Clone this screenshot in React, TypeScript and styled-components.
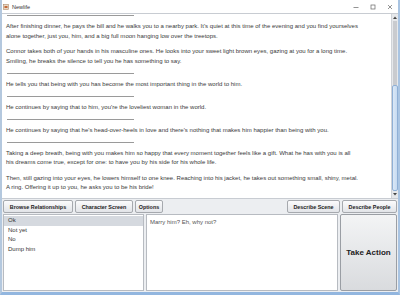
import styled, { createGlobalStyle } from "styled-components"

const GlobalStyle = createGlobalStyle`
  html, body {
    margin: 0;
    padding: 0;
    background: #ffffff;
  }
  * { box-sizing: border-box; }
`

const Window = styled.div`
  width: 400px;
  height: 295px;
  display: flex;
  flex-direction: column;
  background: #eceef1;
  border-left: 2px solid #b4c8de;
  border-right: 2px solid #a9c4e2;
  border-bottom: 3px solid #92b6df;
  font-family: "Liberation Sans", Arial, sans-serif;
  overflow: hidden;
`

const TitleBar = styled.div`
  height: 13px;
  flex: none;
  display: flex;
  align-items: center;
  background: #ffffff;
  padding-left: 1px;
`

const TitleText = styled.span`
  font-size: 5.5px;
  color: #333;
  margin-left: 3px;
`

const Controls = styled.div`
  margin-left: auto;
  display: flex;
  align-items: center;
  gap: 11px;
  padding-right: 5px;
  color: #555;
`

const StoryPanel = styled.div`
  flex: 1;
  display: flex;
  background: #ffffff;
  border-top: 1px solid #c8ccd2;
  border-bottom: 1px solid #c8ccd2;
  min-height: 0;
`

const Story = styled.div`
  flex: 1;
  display: flex;
  flex-direction: column;
  gap: 6.3px;
  padding: 1px 0 0 4px;
  overflow: hidden;
  color: #3a3a3a;
  font-size: 6.02px;
  line-height: 9.4px;
  white-space: nowrap;
`

const Para = styled.div``

const Rule = styled.div`
  width: 127px;
  height: 1px;
  margin-left: 1px;
  background: #9a9a9a;
  flex: none;
`

const ScrollTrack = styled.div`
  width: 7px;
  flex: none;
  display: flex;
  flex-direction: column;
  background: #e6e8eb;
  border-left: 1px solid #d0d3d8;
`

const Arrow = styled.div`
  height: 7px;
  flex: none;
  display: flex;
  align-items: center;
  justify-content: center;
`

const Gutter = styled.div<{ $grow: number }>`
  flex: ${p => p.$grow};
  background: #c9cbcf;
  margin: 0 1px;
`

const Thumb = styled.div<{ $grow: number }>`
  flex: ${p => p.$grow};
  background: linear-gradient(to right, #dbe8f6, #c7dbf1);
  border: 1px solid #8fb0d6;
  border-radius: 2px;
`

const ButtonRow = styled.div`
  height: 15px;
  flex: none;
  display: flex;
  align-items: center;
  gap: 2px;
  padding: 0 1px 0 1px;
`

const Spacer = styled.div`
  flex: 1;
`

const ToolButton = styled.button<{ $w: number }>`
  width: ${p => p.$w}px;
  height: 13px;
  padding: 0;
  border: 1px solid #a6a9ae;
  border-radius: 2px;
  background: linear-gradient(to bottom, #fbfbfc, #e2e4e8);
  font-family: "Liberation Sans", Arial, sans-serif;
  font-weight: bold;
  font-size: 5.4px;
  color: #222;
  white-space: nowrap;
`

const BottomPanel = styled.div`
  height: 78px;
  flex: none;
  display: flex;
  gap: 2px;
  padding: 0 1px 1px 1px;
`

const ListBox = styled.div`
  width: 141px;
  flex: none;
  display: flex;
  flex-direction: column;
  background: #ffffff;
  border: 1px solid #b7bbc1;
  padding-top: 1px;
`

const ListItem = styled.div<{ $selected?: boolean }>`
  height: 9.7px;
  line-height: 9.7px;
  padding-left: 4px;
  font-size: 6px;
  color: #333;
  background: ${p => (p.$selected ? "#d5d9df" : "transparent")};
`

const Reply = styled.div`
  flex: 1;
  background: #ffffff;
  border: 1px solid #b7bbc1;
  padding: 4px 3px;
  font-size: 6px;
  color: #555;
`

const ActionButton = styled.button`
  width: 57px;
  flex: none;
  border: 1px solid #9a9ea4;
  border-radius: 2px;
  background: linear-gradient(to bottom, #f3f4f5, #d9dbde);
  font-family: "Liberation Sans", Arial, sans-serif;
  font-weight: bold;
  font-size: 8px;
  color: #222;
  padding: 0;
`

export default function App() {
  return (
    <>
      <GlobalStyle />
      <Window>
        <TitleBar>
          <svg width="6" height="6" viewBox="0 0 6 6">
            <rect x="0.5" y="0.5" width="5" height="5" fill="#e9d8c4" stroke="#b08a6a" strokeWidth="0.6" />
            <rect x="1.5" y="2" width="3" height="2" fill="#c46a3a" />
          </svg>
          <TitleText>Newlife</TitleText>
          <Controls>
            <svg width="6" height="6" viewBox="0 0 6 6">
              <line x1="0.5" y1="3.5" x2="5.5" y2="3.5" stroke="#666" strokeWidth="0.7" />
            </svg>
            <svg width="6" height="6" viewBox="0 0 6 6">
              <rect x="1" y="1" width="4" height="4" fill="none" stroke="#666" strokeWidth="0.7" />
            </svg>
            <svg width="6" height="6" viewBox="0 0 6 6">
              <path d="M1 1 L5 5 M5 1 L1 5" stroke="#666" strokeWidth="0.7" />
            </svg>
          </Controls>
        </TitleBar>

        <StoryPanel>
          <Story>
            <Rule />
            <Para>
              After finishing dinner, he pays the bill and he walks you to a nearby park. It's quiet at this time of the evening and you find yourselves
              <br />
              alone together, just you, him, and a big full moon hanging low over the treetops.
            </Para>
            <Para>
              Connor takes both of your hands in his masculine ones. He looks into your sweet light brown eyes, gazing at you for a long time.
              <br />
              Smiling, he breaks the silence to tell you he has something to say.
            </Para>
            <Rule />
            <Para>He tells you that being with you has become the most important thing in the world to him.</Para>
            <Rule />
            <Para>He continues by saying that to him, you're the loveliest woman in the world.</Para>
            <Rule />
            <Para>He continues by saying that he's head-over-heels in love and there's nothing that makes him happier than being with you.</Para>
            <Rule />
            <Para>
              Taking a deep breath, being with you makes him so happy that every moment together feels like a gift. What he has with you is all
              <br />
              his dreams come true, except for one: to have you by his side for his whole life.
            </Para>
            <Para>
              Then, still gazing into your eyes, he lowers himself to one knee. Reaching into his jacket, he takes out something small, shiny, metal.
              <br />
              A ring. Offering it up to you, he asks you to be his bride!
            </Para>
          </Story>
          <ScrollTrack>
            <Arrow>
              <svg width="4" height="3" viewBox="0 0 4 3">
                <path d="M0 3 L2 0.5 L4 3 Z" fill="#444" />
              </svg>
            </Arrow>
            <Gutter $grow={66} />
            <Thumb $grow={106} />
            <Arrow>
              <svg width="4" height="3" viewBox="0 0 4 3">
                <path d="M0 0 L2 2.5 L4 0 Z" fill="#444" />
              </svg>
            </Arrow>
          </ScrollTrack>
        </StoryPanel>

        <ButtonRow>
          <ToolButton $w={70}>Browse Relationships</ToolButton>
          <ToolButton $w={58}>Character Screen</ToolButton>
          <ToolButton $w={28}>Options</ToolButton>
          <Spacer />
          <ToolButton $w={53}>Describe Scene</ToolButton>
          <ToolButton $w={55}>Describe People</ToolButton>
        </ButtonRow>

        <BottomPanel>
          <ListBox>
            <ListItem $selected>Ok</ListItem>
            <ListItem>Not yet</ListItem>
            <ListItem>No</ListItem>
            <ListItem>Dump him</ListItem>
          </ListBox>
          <Reply>Marry him? Eh, why not?</Reply>
          <ActionButton>Take Action</ActionButton>
        </BottomPanel>
      </Window>
    </>
  )
}
